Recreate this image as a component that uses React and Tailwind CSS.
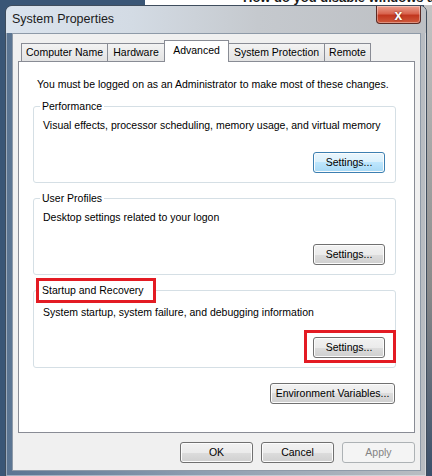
import React from 'react';

const btnStyles = {
  normal:
    'border-[#707070] text-black bg-[linear-gradient(#f2f2f2_0%,#ebebeb_50%,#dddddd_50%,#cfcfcf_100%)] shadow-[inset_0_0_0_1px_#fcfcfc]',
  hover:
    'border-[#3c7fb1] text-black bg-[linear-gradient(#eaf6fd_0%,#d9f0fc_50%,#bee6fd_50%,#a7d9f5_100%)] shadow-[inset_0_0_0_1px_#fcfcfc]',
  disabled: 'border-[#adb2b5] text-[#838383] bg-[#f4f4f4]',
};

function WinButton({ children, variant = 'normal', className = '' }) {
  return (
    <div
      className={`h-[21px] rounded-[3px] border flex items-center justify-center text-[10.5px] leading-none ${btnStyles[variant]} ${className}`}
    >
      {children}
    </div>
  );
}

function Tab({ label, width, selected, last }) {
  if (selected) {
    return (
      <div
        className={`${width} h-[22px] -mb-px relative z-10 bg-white border-l border-t border-r border-[#898c95] flex items-center justify-center pb-[2px]`}
      >
        {label}
      </div>
    );
  }
  return (
    <div
      className={`${width} h-[18px] border-t border-[#898c95] ${last ? 'border-r border-l' : 'border-l'} bg-[linear-gradient(#f3f3f3,#e3e3e3)] flex items-center justify-center`}
    >
      {label}
    </div>
  );
}

function GroupBox({ title, desc, marked, className = '' }) {
  return (
    <fieldset
      className={`ml-[14px] w-[363px] border border-[#d5dfe5] rounded-[3px] pb-[9px] ${className}`}
    >
      {marked ? (
        <legend className="ml-[2px] w-[120px] h-[25px] border-[3px] border-[#e31b23] pl-[3px] leading-[19px] bg-white">
          {title}
        </legend>
      ) : (
        <legend className="ml-[6px] px-[2px] leading-[14px]">{title}</legend>
      )}
      <p className={`pl-[9px] leading-[14px] ${marked ? 'pt-[2px]' : 'pt-[5px]'}`}>{desc}</p>
      <div className={`flex justify-end pr-[10px] ${marked ? 'mt-[18px]' : 'mt-[20px]'}`}>
        <div className="relative">
          <WinButton variant={title === 'Performance' ? 'hover' : 'normal'} className="w-[72px]">
            Settings...
          </WinButton>
          {marked && (
            <div className="absolute -left-[9px] -top-[7px] -right-[11px] -bottom-[5px] border-[3px] border-[#e31b23]" />
          )}
        </div>
      </div>
    </fieldset>
  );
}

export default function App() {
  return (
    <div className="relative w-[432px] h-[476px] overflow-hidden bg-[#3a5676] font-['Liberation_Sans',Arial,sans-serif] text-[10.5px] text-black">
      {/* page behind the dialog */}
      <div className="absolute left-[145px] top-0 right-0 h-[5px] bg-white overflow-hidden">
        <p className="pl-[98px] -mt-[9px] text-[13px] leading-[13px] font-bold text-[#1a1a1a] whitespace-nowrap">
          How do you disable windows a
        </p>
      </div>
      <div className="absolute right-0 top-[5px] bottom-0 w-[8px] bg-[linear-gradient(#c4c4c4,#8a8a8a_60%,#3a4f6a)]" />

      {/* dialog window */}
      <div className="absolute left-[5px] top-[5px] w-[422px] h-[472px] rounded-t-[7px] border border-[#3f4d5d] bg-[linear-gradient(90deg,#5a7492_0%,#8c9db0_45%,#b9bdc2_100%)] shadow-[inset_0_0_0_1px_rgba(255,255,255,0.4)] flex flex-col">
        <div className="h-[27px] flex items-start justify-between pl-[6px] pr-[5px] rounded-t-[6px] bg-[linear-gradient(90deg,#dbe4ee_0%,#d3dbe4_30%,#c5c9ce_60%,#bdc0c4_100%)]">
          <span className="self-center text-[12.5px] text-[#1b1b1b]">System Properties</span>
          <div className="w-[45px] h-[18px] rounded-b-[4px] border border-t-0 border-[#5b2a24] bg-[linear-gradient(#eaa08f_0%,#d9644f_45%,#c2361f_55%,#cf5a3c_100%)] shadow-[inset_0_0_0_1px_rgba(255,255,255,0.35)] flex items-center justify-center">
            <span className="text-white font-bold text-[14px] leading-none [text-shadow:0_0_2px_#5a1a10]">x</span>
          </div>
        </div>

        <div className="ml-[6px] mr-[5px] h-[438px] border border-[#8e9aa8] bg-[#f0f0f0] px-[5px] pt-[6px] flex flex-col">
          <div className="flex items-end h-[21px] pl-[3px]">
            <Tab label="Computer Name" width="w-[86px]" />
            <Tab label="Hardware" width="w-[57px]" />
            <Tab label="Advanced" width="w-[65px]" selected />
            <div className="w-[95px] h-[18px] border-t border-[#898c95] bg-[linear-gradient(#f3f3f3,#e3e3e3)] flex items-center justify-center">
              System Protection
            </div>
            <Tab label="Remote" width="w-[47px]" last />
          </div>

          <div className="h-[372px] border border-[#898c95] bg-white pt-[15px]">
            <p className="pl-[18px] leading-[14px]">
              You must be logged on as an Administrator to make most of these changes.
            </p>
            <GroupBox
              className="mt-[8px]"
              title="Performance"
              desc="Visual effects, processor scheduling, memory usage, and virtual memory"
            />
            <GroupBox
              className="mt-[8px]"
              title="User Profiles"
              desc="Desktop settings related to your logon"
            />
            <GroupBox
              className="mt-[3px]"
              title="Startup and Recovery"
              desc="System startup, system failure, and debugging information"
              marked
            />
            <div className="flex justify-end mt-[15px] pr-[19px]">
              <WinButton className="w-[125px]">Environment Variables...</WinButton>
            </div>
          </div>

          <div className="flex justify-end gap-[8px] mt-[9px]">
            <WinButton className="w-[73px]">OK</WinButton>
            <WinButton className="w-[73px]">Cancel</WinButton>
            <WinButton className="w-[73px]" variant="disabled">Apply</WinButton>
          </div>
        </div>
      </div>
    </div>
  );
}
